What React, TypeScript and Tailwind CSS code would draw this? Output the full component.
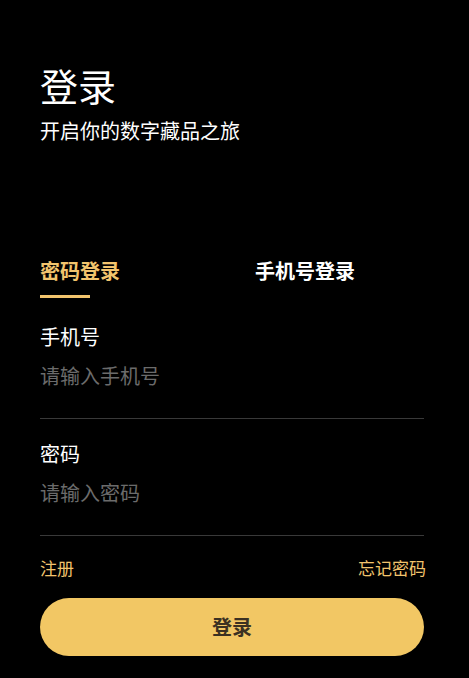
import { useState } from "react";

// Login screen — password / phone tabs, dark theme with gold accents.

const FONT = { fontFamily: '"Noto Sans CJK SC", "Noto Sans", sans-serif' };

function Field({ label, placeholder, type = "text" }: { label: string; placeholder: string; type?: string }) {
  return (
    <div className="border-b border-[#393939] pb-[28px]">
      <p className="text-[20px] leading-[28px] text-white">{label}</p>
      <input
        type={type}
        placeholder={placeholder}
        className="mt-[11px] block h-[28px] w-full bg-transparent text-[20px] leading-[28px] text-white outline-none placeholder:text-[#6b6b6b]"
      />
    </div>
  );
}

export default function App() {
  const [tab, setTab] = useState<"password" | "phone">("password");

  return (
    <div className="min-h-[678px] w-full bg-black px-[40px] pt-[61px] pb-[22px]" style={FONT}>
      <div className="w-[384px]">
        <h1 className="text-[38px] leading-[48px] font-normal text-white">登录</h1>
        <p className="mt-[8px] text-[20px] leading-[28px] text-white">开启你的数字藏品之旅</p>

        <div className="mt-[112px] flex">
          <button onClick={() => setTab("password")} className="w-[215px] text-left">
            <span
              className={`block text-[20px] leading-[28px] font-bold ${
                tab === "password" ? "text-[#f2c46d]" : "text-white"
              }`}
            >
              密码登录
            </span>
            <span
              className={`mt-[10px] block h-[3px] w-[50px] ${
                tab === "password" ? "bg-[#f2c46d]" : "bg-transparent"
              }`}
            />
          </button>
          <button onClick={() => setTab("phone")} className="text-left">
            <span
              className={`block text-[20px] leading-[28px] font-bold ${
                tab === "phone" ? "text-[#f2c46d]" : "text-white"
              }`}
            >
              手机号登录
            </span>
            <span
              className={`mt-[10px] block h-[3px] w-[50px] ${
                tab === "phone" ? "bg-[#f2c46d]" : "bg-transparent"
              }`}
            />
          </button>
        </div>

        <div className="mt-[25px]">
          <Field label="手机号" placeholder="请输入手机号" />
        </div>
        <div className="mt-[21px]">
          <Field label="密码" placeholder="请输入密码" type="password" />
        </div>

        <div className="mt-[20px] flex w-[386px] items-center justify-between text-[17px] leading-[24px] text-[#f2c46d]">
          <a href="#">注册</a>
          <a href="#">忘记密码</a>
        </div>

        <button className="mt-[18px] h-[58px] w-full rounded-full bg-[#f2c764] text-[20px] font-bold text-[#3b3122]">
          登录
        </button>
      </div>
    </div>
  );
}
